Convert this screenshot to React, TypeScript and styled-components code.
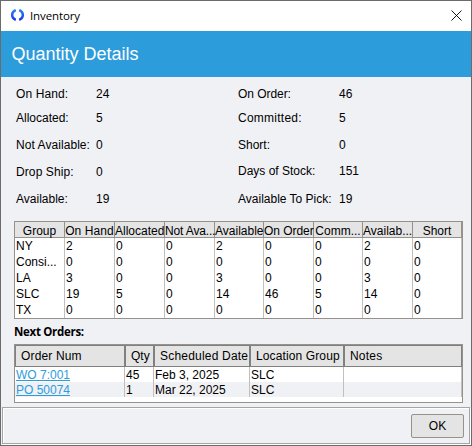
import React from 'react';
import styled, { createGlobalStyle } from 'styled-components';

type Detail = {
  label: string;
  value: string;
  spacing?: number;
  shift?: number;
};

type Column = {
  name: string;
  spacing?: number;
};

type Order = {
  num: string;
  qty: string;
  date: string;
  group: string;
  notes: string;
};

const leftDetails: Detail[] = [
  { label: 'On Hand:', value: '24', spacing: 0.12 },
  { label: 'Allocated:', value: '5' },
  { label: 'Not Available:', value: '0', spacing: 0.06 },
  { label: 'Drop Ship:', value: '0', spacing: 0.1 },
  { label: 'Available:', value: '19' },
];

const rightDetails: Detail[] = [
  { label: 'On Order:', value: '46', spacing: -0.05 },
  { label: 'Committed:', value: '5', spacing: 0.25 },
  { label: 'Short:', value: '0' },
  { label: 'Days of Stock:', value: '151', shift: -1 },
  { label: 'Available To Pick:', value: '19' },
];

const groupColumns: Column[] = [
  { name: 'Group' },
  { name: 'On Hand', spacing: 0.1 },
  { name: 'Allocated' },
  { name: 'Not Ava...', spacing: -0.15 },
  { name: 'Available' },
  { name: 'On Order', spacing: -0.05 },
  { name: 'Comm...' },
  { name: 'Availab...' },
  { name: 'Short' },
];

const groupRows = [
  ['NY', '2', '0', '0', '2', '0', '0', '2', '0'],
  ['Consi...', '0', '0', '0', '0', '0', '0', '0', '0'],
  ['LA', '3', '0', '0', '3', '0', '0', '3', '0'],
  ['SLC', '19', '5', '0', '14', '46', '5', '14', '0'],
  ['TX', '0', '0', '0', '0', '0', '0', '0', '0'],
];

const orderColumns: Column[] = [
  { name: 'Order Num', spacing: 0.15 },
  { name: 'Qty' },
  { name: 'Scheduled Date', spacing: 0.2 },
  { name: 'Location Group', spacing: 0.12 },
  { name: 'Notes', spacing: 0.2 },
];

const orders: Order[] = [
  { num: 'WO 7:001', qty: '45', date: 'Feb 3, 2025', group: 'SLC', notes: '' },
  { num: 'PO 50074', qty: '1', date: 'Mar 22, 2025', group: 'SLC', notes: '' },
];

const GlobalStyle = createGlobalStyle`
  * {
    box-sizing: border-box;
  }

  body {
    margin: 0;
    font-family: 'Liberation Sans', Arial, sans-serif;
    font-size: 12px;
    color: #000;
  }
`;

const Window = styled.div`
  display: flex;
  flex-direction: column;
  width: 472px;
  height: 446px;
  border: 1px solid #6b6b6b;
  background: #f0f1f5;
  overflow: hidden;
  white-space: nowrap;
`;

const TitleBar = styled.div`
  display: flex;
  align-items: center;
  height: 30px;
  flex: none;
  padding: 0 9px 2px 10px;
  background: #fff;
`;

const Title = styled.span`
  flex: 1;
  margin-left: 6px;
  font-family: 'Open Sans', sans-serif;
  font-size: 11.5px;
  letter-spacing: -0.12px;
`;

const Banner = styled.h1`
  flex: none;
  height: 46px;
  margin: 0;
  padding-left: 10.5px;
  background: #2d9cdb;
  color: #fff;
  font-size: 18px;
  font-weight: normal;
  line-height: 46px;
`;

const Details = styled.div`
  display: grid;
  grid-template-columns: 222px 1fr;
  flex: none;
  height: 144px;
  padding: 5px 0 0 15px;
`;

const DetailList = styled.dl<{ $labelWidth: number }>`
  display: grid;
  grid-template-columns: ${({ $labelWidth }) => $labelWidth}px 1fr;
  grid-template-rows: 24px 24px 30px 24px 30px;
  align-items: center;
  margin: 0;
`;

const Label = styled.dt<{ $shift?: number; $spacing?: number }>`
  letter-spacing: ${({ $spacing }) => $spacing || 0}px;
  transform: translateY(${({ $shift }) => $shift || 0}px);
`;

const Value = styled.dd<{ $shift?: number }>`
  margin: 0;
  transform: translateY(${({ $shift }) => $shift || 0}px);
`;

const Frame = styled.div<{ $height: number }>`
  flex: none;
  height: ${({ $height }) => $height}px;
  margin: 0 8px 0 13px;
  border: 1px solid #96918a;
  background: #fff;
`;

const GroupRow = styled.div`
  display: grid;
  grid-template-columns: 50px 50px 50px 50px 49px 50px 49px 50px 49px;
  grid-template-rows: 16px;
  height: 16px;
`;

const GroupHead = styled.div<{ $spacing?: number }>`
  border-right: 1px solid #96918a;
  border-bottom: 1px solid #96918a;
  background: #e4e4e4;
  letter-spacing: ${({ $spacing }) => $spacing || 0}px;
  line-height: 18px;
  text-align: center;
`;

const GroupCell = styled.div`
  padding-left: 1px;
  border-right: 1px solid #c0c0c0;
  line-height: 17px;
`;

const SectionTitle = styled.h2`
  flex: none;
  height: 25px;
  margin: 0 0 0 13px;
  font-family: 'Open Sans', sans-serif;
  font-size: 11.5px;
  font-weight: bold;
  letter-spacing: -0.3px;
  line-height: 25px;
`;

const OrderRow = styled.div<{ $striped?: boolean }>`
  display: grid;
  grid-template-columns: 110px 29px 96px 94px 118px;
  grid-template-rows: 100%;
  height: 15px;
  background: ${({ $striped }) => ($striped ? '#f0f1f5' : '#fff')};
`;

const OrderHeadRow = styled(OrderRow)`
  height: 22px;
`;

const OrderHead = styled.div<{ $spacing?: number }>`
  padding-left: 5px;
  border: 1px solid #808080;
  background: #e4e4e4;
  letter-spacing: ${({ $spacing }) => $spacing || 0}px;
  line-height: 21px;
`;

const OrderCell = styled.div`
  padding-left: 1px;
  border-right: 1px solid #c0c0c0;
  line-height: 16px;
`;

const OrderLink = styled.a`
  color: #2d9cdb;
  text-decoration: underline;
`;

const Footer = styled.div`
  display: flex;
  align-items: center;
  justify-content: flex-end;
  flex: none;
  height: 37px;
  margin: 4px 1px 0 1px;
  padding-right: 5px;
  border: 1px solid #a5a5a5;
  box-shadow: inset 1px 1px #fff, 1px 1px #fff;
`;

const Button = styled.button`
  width: 53px;
  height: 24px;
  padding: 0;
  border: 1px solid #96918a;
  border-radius: 2px;
  background: #e4e4e4;
  color: #000;
  font: 12px 'Liberation Sans', Arial, sans-serif;
`;

const Logo = () => (
  <svg width="13" height="12" viewBox="0 0 13 12" fill="none" stroke="url(#logoBlue)" strokeWidth="2.4">
    <defs>
      <linearGradient id="logoBlue" x1="0" y1="0" x2="0" y2="12" gradientUnits="userSpaceOnUse">
        <stop offset="0" stopColor="#2f86f5" />
        <stop offset="1" stopColor="#1433e6" />
      </linearGradient>
    </defs>
    <path d="M4.8 1.1C-0.1 3 -0.1 9 4.8 10.9" />
    <path d="M8.2 1.1C13.1 3 13.1 9 8.2 10.9" />
  </svg>
);

const CloseIcon = () => (
  <svg width="11" height="11" viewBox="0 0 11 11" stroke="#000" strokeWidth="0.9">
    <path d="M0.5 0.5L10.5 10.5M10.5 0.5L0.5 10.5" />
  </svg>
);

const renderDetails = (items: Detail[]) =>
  items.map((item) => (
    <React.Fragment key={item.label}>
      <Label $shift={item.shift} $spacing={item.spacing}>{item.label}</Label>
      <Value $shift={item.shift}>{item.value}</Value>
    </React.Fragment>
  ));

const App: React.FC = () => {
  return (
    <Window>
      <GlobalStyle />
      <TitleBar>
        <Logo />
        <Title>Inventory</Title>
        <CloseIcon />
      </TitleBar>
      <Banner>Quantity Details</Banner>
      <Details>
        <DetailList $labelWidth={80}>{renderDetails(leftDetails)}</DetailList>
        <DetailList $labelWidth={101}>{renderDetails(rightDetails)}</DetailList>
      </Details>
      <Frame $height={98}>
        <GroupRow>
          {groupColumns.map((column) => (
            <GroupHead key={column.name} $spacing={column.spacing}>{column.name}</GroupHead>
          ))}
        </GroupRow>
        {groupRows.map((row) => (
          <GroupRow key={row[0]}>
            {row.map((cell, index) => (
              <GroupCell key={index}>{cell}</GroupCell>
            ))}
          </GroupRow>
        ))}
      </Frame>
      <SectionTitle>Next Orders:</SectionTitle>
      <Frame $height={59}>
        <OrderHeadRow>
          {orderColumns.map((column) => (
            <OrderHead key={column.name} $spacing={column.spacing}>{column.name}</OrderHead>
          ))}
        </OrderHeadRow>
        {orders.map((order, index) => (
          <OrderRow key={order.num} $striped={index % 2 === 1}>
            <OrderCell><OrderLink>{order.num}</OrderLink></OrderCell>
            <OrderCell>{order.qty}</OrderCell>
            <OrderCell>{order.date}</OrderCell>
            <OrderCell>{order.group}</OrderCell>
            <OrderCell>{order.notes}</OrderCell>
          </OrderRow>
        ))}
      </Frame>
      <Footer>
        <Button>OK</Button>
      </Footer>
    </Window>
  );
};

export default App;
